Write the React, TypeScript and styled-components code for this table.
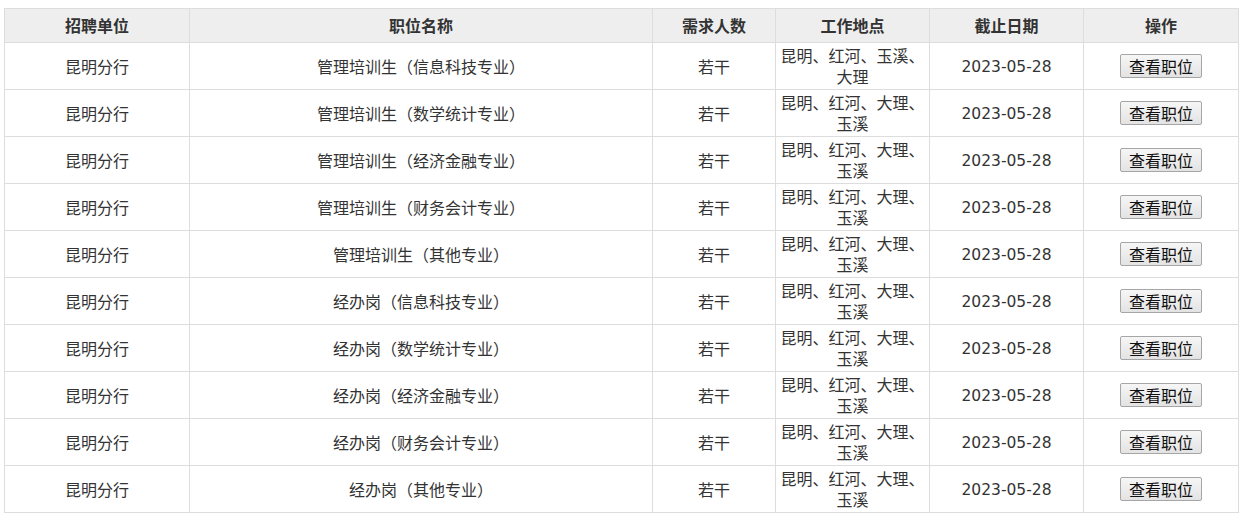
import React from 'react';
import styled, { createGlobalStyle } from 'styled-components';

const GlobalStyle = createGlobalStyle`
  body {
    margin: 0;
    background: #fff;
    font-family: "Noto Sans CJK SC", "Noto Sans", sans-serif;
  }
`;

const Wrapper = styled.div`
  padding: 8px 6px 0 4px;
`;

const Table = styled.table`
  width: 1234px;
  border-collapse: collapse;
  table-layout: fixed;
  font-size: 16px;
  color: #333;
`;

const HeadRow = styled.tr`
  height: 34px;
  background: #eeeeee;
`;

const HeadCell = styled.th`
  border: 1px solid #dddddd;
  font-weight: bold;
  text-align: center;
  padding: 0 3px;
  line-height: 21px;
`;

const BodyRow = styled.tr`
  height: 47px;
`;

const Cell = styled.td<{ $numeric?: boolean }>`
  border: 1px solid #dddddd;
  text-align: center;
  padding: ${(p) => (p.$numeric ? '4px 3px 2px' : '2px 3px')};
  line-height: 21px;
  font-family: ${(p) =>
    p.$numeric ? '"DejaVu Sans", "Noto Sans CJK SC", sans-serif' : 'inherit'};
  font-size: ${(p) => (p.$numeric ? '15.5px' : '16px')};
`;

const ViewButton = styled.button`
  font-family: "Noto Sans CJK SC", sans-serif;
  font-size: 16px;
  color: #111;
  height: 24px;
  padding: 0 8px;
  line-height: 20px;
  border: 1px solid #a6a6a6;
  border-radius: 2px;
  background: linear-gradient(#f6f6f6, #e3e3e3);
  cursor: pointer;
`;

const columns = [
  { title: '招聘单位', width: 185 },
  { title: '职位名称', width: 463 },
  { title: '需求人数', width: 123 },
  { title: '工作地点', width: 154 },
  { title: '截止日期', width: 154 },
  { title: '操作', width: 155 },
];

const jobs = [
  { name: '管理培训生（信息科技专业）', place: '昆明、红河、玉溪、大理' },
  { name: '管理培训生（数学统计专业）', place: '昆明、红河、大理、玉溪' },
  { name: '管理培训生（经济金融专业）', place: '昆明、红河、大理、玉溪' },
  { name: '管理培训生（财务会计专业）', place: '昆明、红河、大理、玉溪' },
  { name: '管理培训生（其他专业）', place: '昆明、红河、大理、玉溪' },
  { name: '经办岗（信息科技专业）', place: '昆明、红河、大理、玉溪' },
  { name: '经办岗（数学统计专业）', place: '昆明、红河、大理、玉溪' },
  { name: '经办岗（经济金融专业）', place: '昆明、红河、大理、玉溪' },
  { name: '经办岗（财务会计专业）', place: '昆明、红河、大理、玉溪' },
  { name: '经办岗（其他专业）', place: '昆明、红河、大理、玉溪' },
];

const App: React.FC = () => {
  return (
    <Wrapper>
      <GlobalStyle />
      <Table>
        <colgroup>
          {columns.map((c) => (
            <col key={c.title} style={{ width: c.width }} />
          ))}
        </colgroup>
        <thead>
          <HeadRow>
            {columns.map((c) => (
              <HeadCell key={c.title}>{c.title}</HeadCell>
            ))}
          </HeadRow>
        </thead>
        <tbody>
          {jobs.map((job, i) => (
            <BodyRow key={i}>
              <Cell>昆明分行</Cell>
              <Cell>{job.name}</Cell>
              <Cell>若干</Cell>
              <Cell>{job.place}</Cell>
              <Cell $numeric>2023-05-28</Cell>
              <Cell>
                <ViewButton>查看职位</ViewButton>
              </Cell>
            </BodyRow>
          ))}
        </tbody>
      </Table>
    </Wrapper>
  );
};

export default App;
